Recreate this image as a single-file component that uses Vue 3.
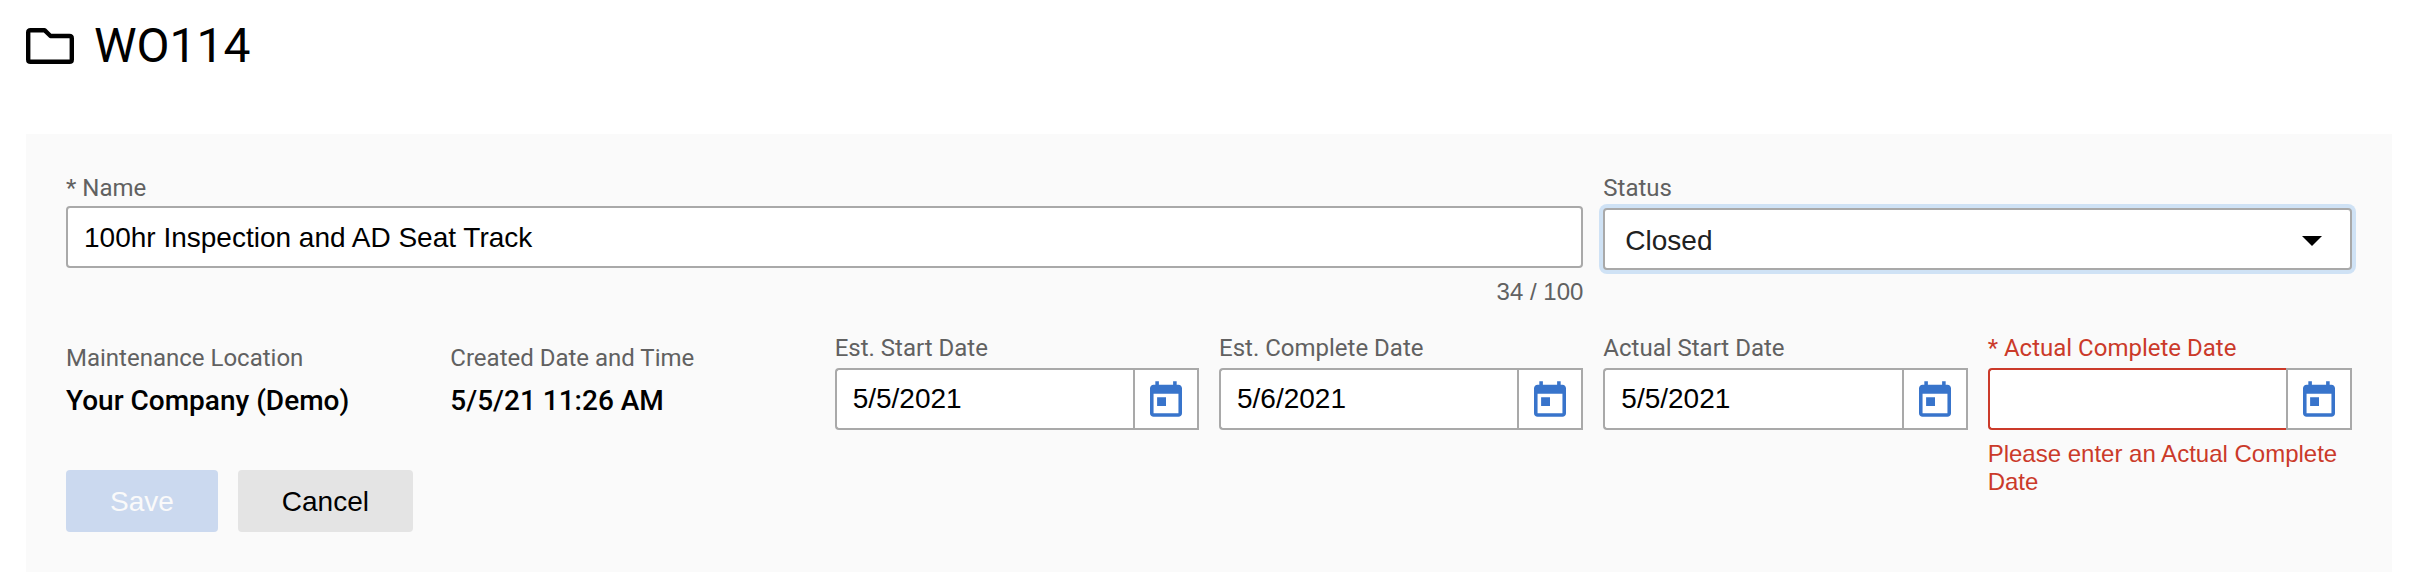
<script setup>
import { ref } from 'vue'

const name = ref('100hr Inspection and AD Seat Track')
const status = ref('Closed')
const maxLength = 100

const details = [
  { label: 'Maintenance Location', value: 'Your Company (Demo)' },
  { label: 'Created Date and Time', value: '5/5/21 11:26 AM' }
]

const dates = ref([
  { id: 'est-start', label: 'Est. Start Date', value: '5/5/2021' },
  { id: 'est-complete', label: 'Est. Complete Date', value: '5/6/2021' },
  { id: 'actual-start', label: 'Actual Start Date', value: '5/5/2021' },
  {
    id: 'actual-complete',
    label: '* Actual Complete Date',
    value: '',
    error: 'Please enter an Actual Complete Date'
  }
])
</script>

<template>
  <main class="page">
    <header class="heading">
      <svg class="folder" viewBox="0 0 48 36" aria-hidden="true">
        <path d="M4.6 2.2H18.5L24.5 8H43.4Q45.8 8 45.8 10.4V31.4Q45.8 33.8 43.4 33.8H4.6Q2.2 33.8 2.2 31.4V4.6Q2.2 2.2 4.6 2.2Z" />
      </svg>
      <h1>WO114</h1>
    </header>

    <form class="panel" @submit.prevent>
      <div class="field name">
        <label for="name">* Name</label>
        <input id="name" v-model="name" class="box" type="text" :maxlength="maxLength">
        <span class="counter">{{ name.length }} / {{ maxLength }}</span>
      </div>

      <div class="field status">
        <label for="status">Status</label>
        <div class="select">
          <select id="status" v-model="status" class="box">
            <option>Open</option>
            <option>Closed</option>
          </select>
          <svg class="arrow" viewBox="0 0 20 10" aria-hidden="true"><path d="M0 0h20L10 10z" /></svg>
        </div>
      </div>

      <dl v-for="item in details" :key="item.label" class="detail">
        <dt>{{ item.label }}</dt>
        <dd>{{ item.value }}</dd>
      </dl>

      <div v-for="date in dates" :key="date.id" class="field date" :class="{ invalid: date.error }">
        <label :for="date.id">{{ date.label }}</label>
        <div class="picker">
          <input :id="date.id" v-model="date.value" class="box" type="text">
          <button type="button" class="calendar" aria-label="Open calendar">
            <svg viewBox="3 1 18 20" aria-hidden="true">
              <path d="M19 3h-1V1h-2v2H8V1H6v2H5c-1.11 0-1.99.9-1.99 2L3 19c0 1.1.89 2 2 2h14c1.1 0 2-.9 2-2V5c0-1.1-.9-2-2-2zm0 16H5V8h14v11zM7 10h5v5H7z" />
            </svg>
          </button>
        </div>
        <p v-if="date.error" class="error">{{ date.error }}</p>
      </div>

      <div class="actions">
        <button type="submit" class="action save" disabled>Save</button>
        <button type="button" class="action cancel">Cancel</button>
      </div>
    </form>
  </main>
</template>

<style>
body {
  margin: 0;
  background: #fff;
}
</style>

<style scoped>
* {
  box-sizing: border-box;
}

.page {
  padding: 16px 18px 16px 26px;
  font-family: Roboto, "Liberation Sans", sans-serif;
  color: #000;
}

.heading {
  display: flex;
  align-items: center;
  gap: 20px;
  height: 60px;
  margin-bottom: 58px;
}

.folder {
  width: 48px;
  height: 36px;
  fill: none;
  stroke: #000;
  stroke-width: 4.4;
  stroke-linejoin: round;
}

h1 {
  margin: 0;
  font-size: 48px;
  font-weight: 400;
  line-height: 60px;
}

.panel {
  display: grid;
  grid-template-columns: repeat(6, minmax(0, 1fr));
  grid-template-rows: auto auto 1fr;
  column-gap: 20px;
  padding: 40px;
  background: #fafafa;
}

.field {
  display: flex;
  flex-direction: column;
}

.name {
  grid-column: span 4;
  margin-bottom: 28px;
}

.status {
  grid-column: span 2;
}

label,
dt {
  font-size: 24px;
  line-height: 28px;
  color: #616161;
}

label {
  margin-bottom: 4px;
}

.status label,
.date label {
  margin-bottom: 6px;
}

.box {
  width: 100%;
  height: 62px;
  margin: 0;
  padding: 2px 16px 0;
  border: 2px solid #a9a9a9;
  border-radius: 4px;
  outline: none;
  background: #fff;
  color: #000;
  font-family: "Liberation Sans", Arial, sans-serif;
  font-size: 28px;
}

.counter,
.error {
  margin: 10px 0 0;
  font-family: "Liberation Sans", Arial, sans-serif;
  font-size: 24px;
  line-height: 28px;
}

.counter {
  align-self: flex-end;
  color: #616161;
}

.select {
  position: relative;
}

.select .box {
  display: block;
  padding: 2px 20px 0;
  appearance: none;
  color: #212121;
  box-shadow: 0 0 0 4px #cfe2f5;
}

.arrow {
  position: absolute;
  top: 28px;
  right: 30px;
  width: 20px;
  height: 10px;
  pointer-events: none;
}

.detail {
  grid-row: 2;
  margin: 0;
  padding-top: 10px;
}

dt {
  margin-bottom: 12px;
}

dd {
  margin: 0;
  font-size: 28px;
  font-weight: 500;
  line-height: 34px;
}

.date {
  grid-row: 2 / span 2;
}

.picker {
  display: flex;
}

.picker .box {
  flex: 1;
  min-width: 0;
  padding-top: 0;
  border-right: 0;
  border-radius: 4px 0 0 4px;
}

.calendar {
  display: flex;
  flex: none;
  align-items: center;
  justify-content: center;
  width: 66px;
  height: 62px;
  padding: 0;
  border: 2px solid #a9a9a9;
  background: #fff;
}

.calendar svg {
  width: 32px;
  height: 36px;
  fill: #3874cb;
}

.invalid label,
.error {
  color: #cb3a2a;
}

.invalid .box {
  border-color: #cb3a2a;
}

.actions {
  display: flex;
  grid-row: 3;
  grid-column: 1 / span 2;
  gap: 20px;
  margin-top: 52px;
}

.action {
  height: 62px;
  padding: 2px 44px 0;
  border: 0;
  border-radius: 4px;
  font-family: "Liberation Sans", Arial, sans-serif;
  font-size: 28px;
}

.save {
  background: #cbd9ef;
  color: #fafafa;
}

.cancel {
  background: #e4e4e4;
  color: #000;
}
</style>
